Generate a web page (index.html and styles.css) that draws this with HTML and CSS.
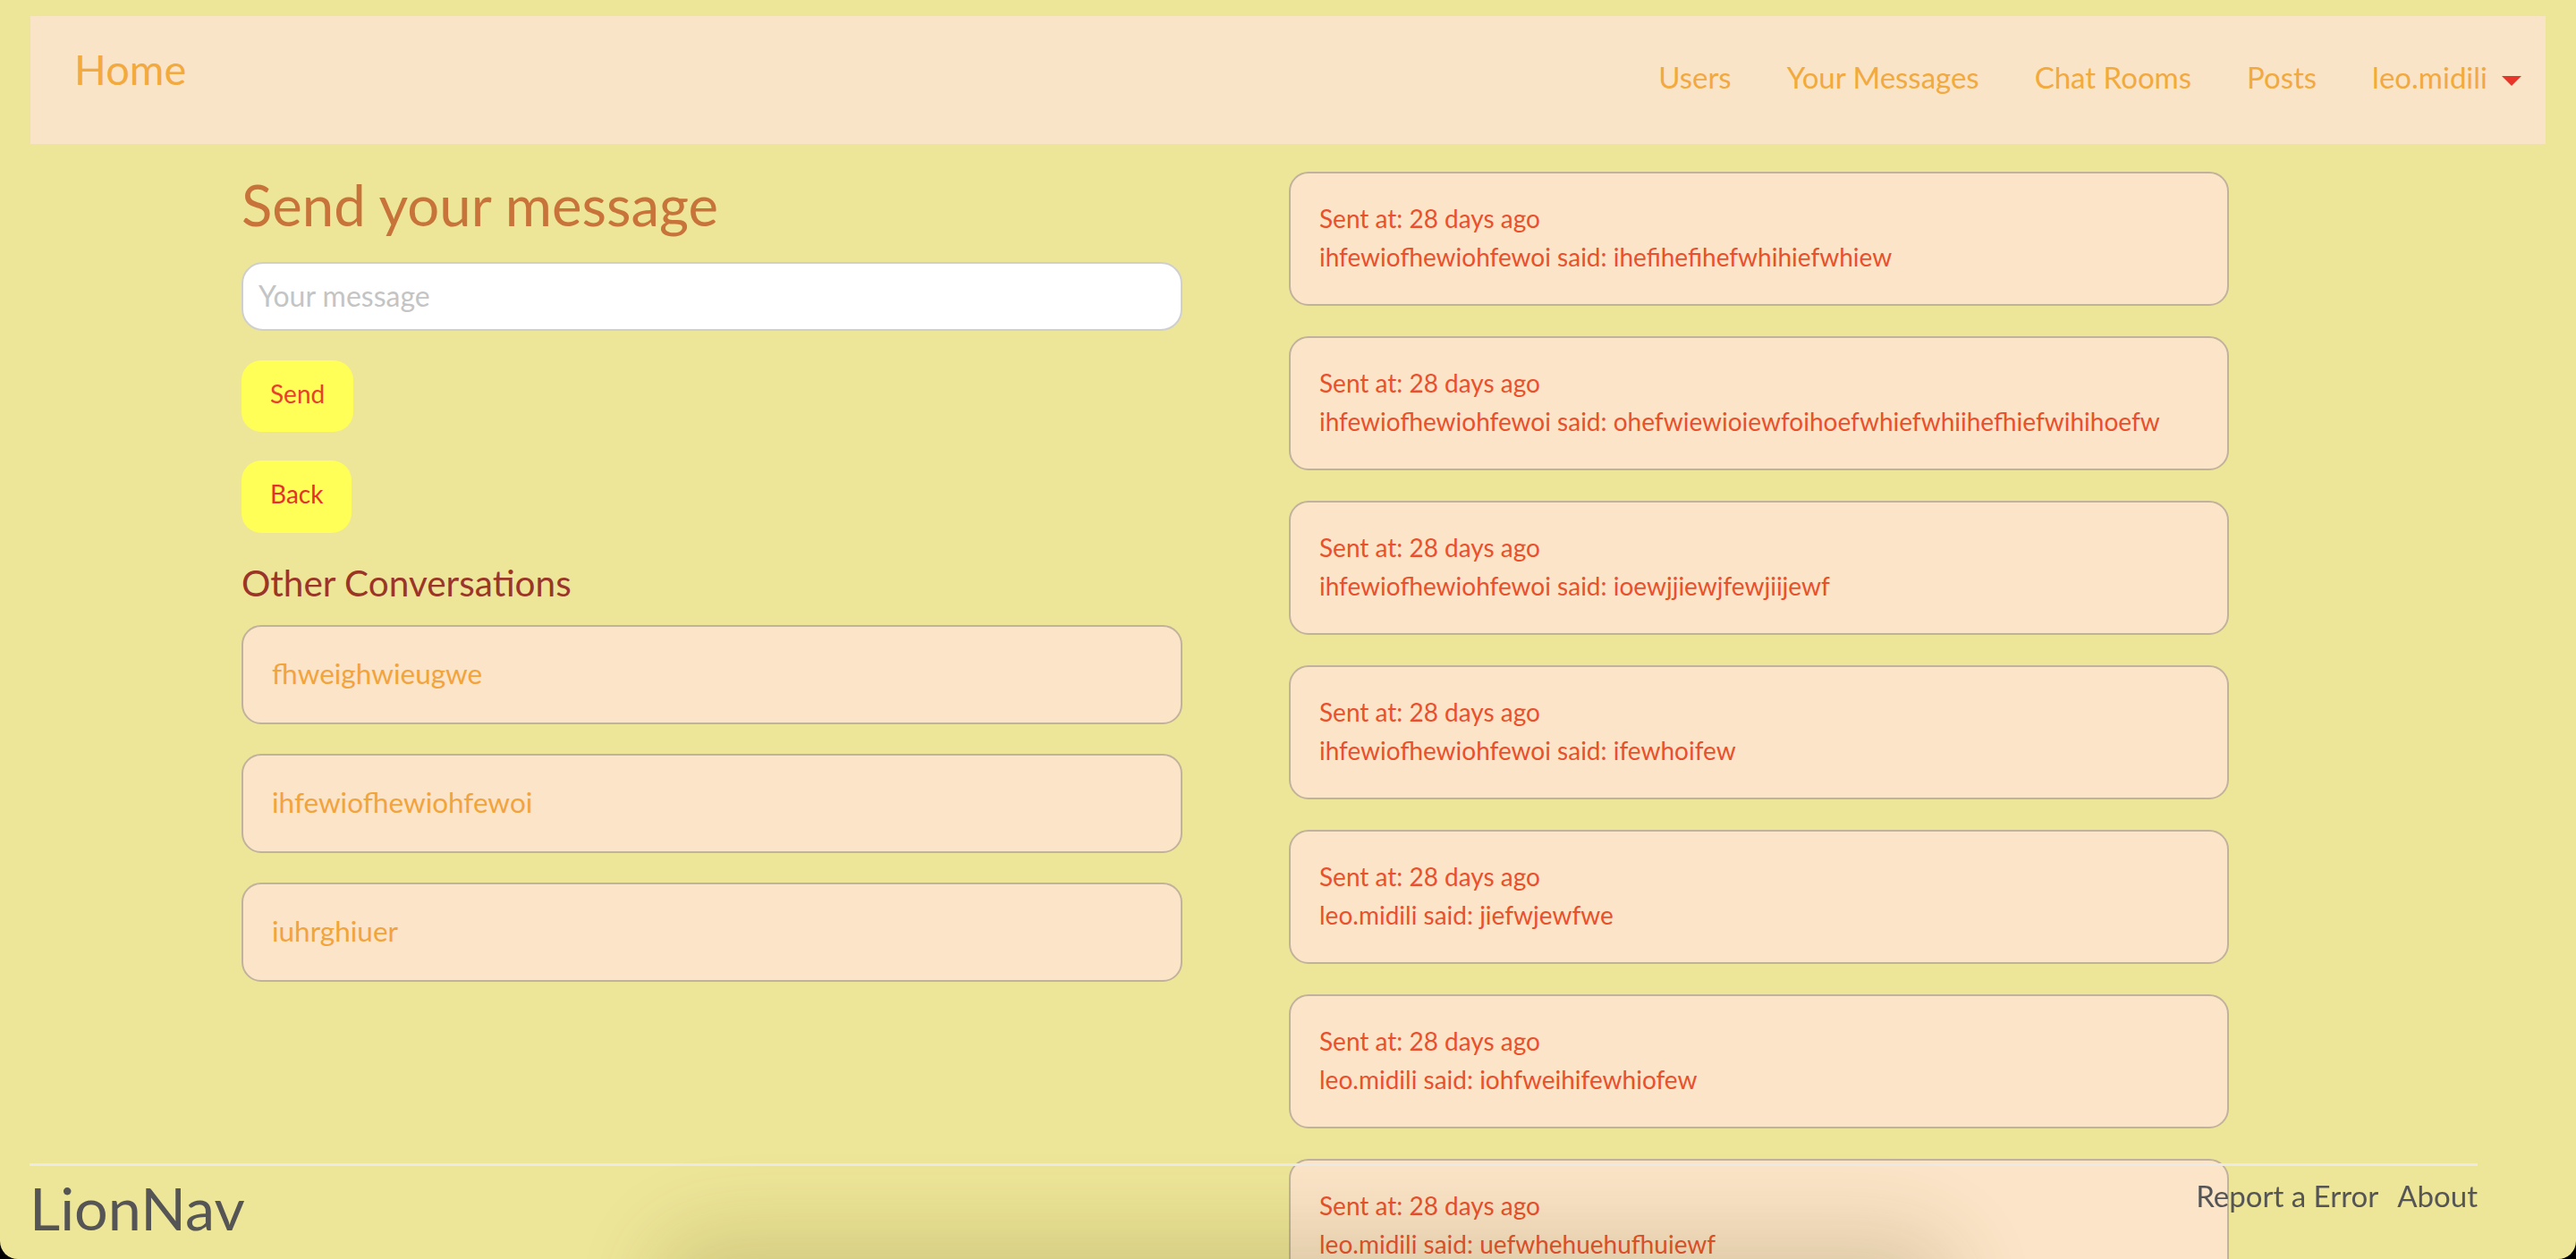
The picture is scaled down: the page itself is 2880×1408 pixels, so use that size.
FILE: index.html
```html
<!DOCTYPE html>
<html lang="en">
<head>
<meta charset="utf-8">
<title>LionNav - Messages</title>
<link rel="stylesheet" href="styles.css">
</head>
<body>
<nav class="navbar">
  <a class="brand" href="#">Home</a>
  <ul class="nav-links">
    <li><a href="#">Users</a></li>
    <li><a href="#">Your Messages</a></li>
    <li><a href="#">Chat Rooms</a></li>
    <li><a href="#">Posts</a></li>
    <li><a href="#" class="dropdown-toggle">leo.midili<span class="caret"></span></a></li>
  </ul>
</nav>

<main class="main">
  <section class="left-col">
    <h1 class="title">Send your message</h1>
    <form class="send-form">
      <input class="msg-input" type="text" placeholder="Your message">
      <button class="btn" type="button">Send</button>
    </form>
    <a class="btn" href="#">Back</a>
    <h2 class="subtitle">Other Conversations</h2>
    <ul class="conv-list">
      <li class="conv-card"><a href="#">fhweighwieugwe</a></li>
      <li class="conv-card"><a href="#">ihfewiofhewiohfewoi</a></li>
      <li class="conv-card"><a href="#">iuhrghiuer</a></li>
    </ul>
  </section>

  <section class="right-col">
    <div class="msg-card"><p>Sent at: 28 days ago</p><p>ihfewiofhewiohfewoi said: ihefihefihefwhihiefwhiew</p></div>
    <div class="msg-card"><p>Sent at: 28 days ago</p><p>ihfewiofhewiohfewoi said: ohefwiewioiewfoihoefwhiefwhiihefhiefwihihoefw</p></div>
    <div class="msg-card"><p>Sent at: 28 days ago</p><p>ihfewiofhewiohfewoi said: ioewjjiewjfewjiijewf</p></div>
    <div class="msg-card"><p>Sent at: 28 days ago</p><p>ihfewiofhewiohfewoi said: ifewhoifew</p></div>
    <div class="msg-card"><p>Sent at: 28 days ago</p><p>leo.midili said: jiefwjewfwe</p></div>
    <div class="msg-card"><p>Sent at: 28 days ago</p><p>leo.midili said: iohfweihifewhiofew</p></div>
    <div class="msg-card"><p>Sent at: 28 days ago</p><p>leo.midili said: uefwhehuehufhuiewf</p></div>
  </section>
</main>

<footer class="footer">
  <span class="footer-brand">LionNav</span>
  <div class="footer-links">
    <a href="#">Report a Error</a>
    <a href="#">About</a>
  </div>
</footer>

<div class="bottom-shade"></div>
<div class="window-frame"></div>
</body>
</html>
```
FILE: styles.css
```css
html {
  overflow: hidden;
}

body {
  margin: 0;
  background: #ede598;
  font-family: "Lato", "Open Sans", sans-serif;
  font-weight: 400;
}

a {
  text-decoration: none;
  color: inherit;
}

ul {
  list-style: none;
  margin: 0;
  padding: 0;
}

/* ---------- navbar ---------- */
.navbar {
  margin: 18px 34px 0;
  height: 143px;
  box-sizing: border-box;
  padding: 36px 27px 0 49px;
  background: #fae4c7;
  display: flex;
  align-items: flex-start;
  justify-content: space-between;
}

.brand {
  font-size: 47px;
  line-height: 1;
  color: #f2a93d;
}

.nav-links {
  margin-top: 16px;
  display: flex;
  align-items: baseline;
  gap: 62px;
  font-size: 33px;
  line-height: 1;
  color: #f2a93d;
}

.caret {
  display: inline-block;
  width: 0;
  height: 0;
  margin-left: 16px;
  border-top: 11px solid #e8352a;
  border-left: 11.5px solid transparent;
  border-right: 11.5px solid transparent;
  vertical-align: 3px;
}

/* ---------- main ---------- */
.main {
  display: flex;
  align-items: flex-start;
  gap: 119px;
  padding-left: 270px;
  margin-top: 31px;
}

.left-col {
  width: 1052px;
  display: flex;
  flex-direction: column;
  align-items: flex-start;
}

.title {
  margin: 5px 0 0;
  font-size: 63.5px;
  line-height: 1;
  font-weight: 400;
  color: #c8733a;
}

.send-form {
  width: 100%;
  display: flex;
  flex-direction: column;
  align-items: flex-start;
}

.msg-input {
  margin-top: 32px;
  width: 100%;
  height: 77px;
  box-sizing: border-box;
  border: 2px solid #cfcfcf;
  border-radius: 24px;
  background: #fff;
  padding: 0 17px 2px;
  font-family: inherit;
  font-size: 32px;
  color: #444;
  outline: none;
}

.msg-input::placeholder {
  color: #c4c4c4;
}

.btn {
  margin-top: 33px;
  height: 80px;
  box-sizing: border-box;
  padding: 0 32px 6px;
  border: none;
  border-radius: 22px;
  background: #ffff57;
  color: #e8402a;
  font-family: inherit;
  font-size: 28px;
  line-height: 74px;
  display: inline-block;
}

.left-col > .btn {
  margin-top: 32px;
  height: 81px;
  color: #e8302a;
}

.subtitle {
  margin: 36px 0 0;
  font-size: 40.5px;
  line-height: 1;
  font-weight: 400;
  color: #9b3526;
}

.conv-list {
  width: 100%;
  margin-top: 27px;
  display: flex;
  flex-direction: column;
  gap: 33px;
}

.conv-card {
  height: 111px;
  box-sizing: border-box;
  border: 2px solid #c0b29c;
  border-radius: 22px;
  background: #fbe4c7;
  padding: 37px 32px 0;
  font-size: 31.5px;
  line-height: 1;
  color: #f2a33c;
}

/* ---------- messages ---------- */
.right-col {
  width: 1051px;
  display: flex;
  flex-direction: column;
  gap: 34px;
}

.msg-card {
  height: 150px;
  flex: none;
  box-sizing: border-box;
  border: 2px solid #c0b29c;
  border-radius: 22px;
  background: #fbe4c7;
  padding: 29px 32px 0;
  font-size: 28px;
  line-height: 43px;
  color: #e9502c;
}

.msg-card p {
  margin: 0;
}

/* ---------- footer (fixed overlay) ---------- */
.footer {
  position: fixed;
  left: 33px;
  bottom: 0;
  width: 2737px;
  height: 107px;
  box-sizing: border-box;
  border-top: 3px solid #eceae4;
  padding-top: 13px;
  display: flex;
  justify-content: space-between;
  align-items: flex-start;
  color: #555;
  z-index: 5;
}

.footer-brand {
  font-size: 66.5px;
  line-height: 1;
}

.footer-links {
  margin-top: 4px;
  display: flex;
  gap: 21px;
  font-size: 33px;
  line-height: 1;
}

.bottom-shade {
  position: fixed;
  left: 760px;
  width: 1400px;
  bottom: -80px;
  height: 80px;
  border-radius: 60px;
  box-shadow: 0 0 90px 30px rgba(90, 75, 10, 0.18);
  pointer-events: none;
  z-index: 6;
}

.window-frame {
  position: fixed;
  inset: 0;
  border-radius: 0 0 20px 20px;
  box-shadow: 0 0 0 40px #000;
  pointer-events: none;
  z-index: 10;
}
```
